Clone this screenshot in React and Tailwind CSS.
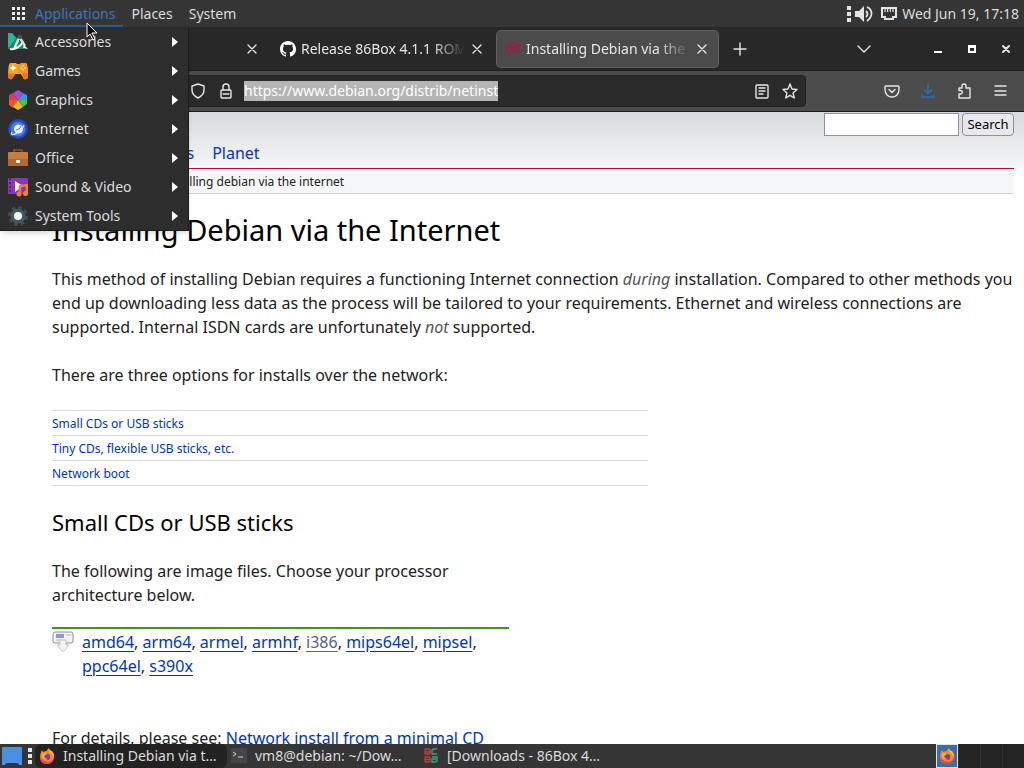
import { useState } from "react"
import clsx from "clsx"

function AccessoriesIcon() {
  return (
    <svg viewBox="0 0 20 20" className="size-5">
      <path d="M0 1h4l12 13v3H0z" fill="#178a74" />
      <path d="M0 1h4l4 5-7 9H0z" fill="#2bb597" />
      <path d="M2 17c5 1 11-2 13-8" fill="none" stroke="#f4f4f4" strokeWidth="2" />
      <path d="M11 6L7 15M12 6l5 8" stroke="#d8dcde" strokeWidth="2.4" />
      <path d="M7 13l-3 5 5-3zM16 13l4 4-5-1z" fill="#fff" />
      <circle cx="12" cy="5" r="2.2" fill="#44545c" />
    </svg>
  )
}

function GamesIcon() {
  return (
    <svg viewBox="0 0 20 20" className="size-5">
      <path d="M2 2h6l1 1h3l1-1h5q2 1 2 14-1 3-4 2l-3-5H7l-3 5q-3 1-4-2Q0 3 2 2z" fill="#f9a61b" />
      <path d="M10 3h2l1-1h5q2 1 2 14-1 3-4 2l-3-5h-3z" fill="#f8941f" />
      <path d="M2.500 7h5M5 4.500v5" stroke="#fff" strokeWidth="1.800" />
      <path d="M15 4v1.600M15 8v1.600M12.500 7h1.600M16.200 7h1.600" stroke="#fff3d0" strokeWidth="1.600" />
      <path d="M0 12l6 1-2 5q-3 1-4-2zM20 12l-6 1 2 5q3 1 4-2z" fill="#f2701c" />
    </svg>
  )
}

function GraphicsIcon() {
  return (
    <svg viewBox="0 0 20 20" className="size-5">
      <path d="M10 0l5 3-5 7-5-7z" fill="#a44be0" />
      <path d="M5 3L1 5v6l9-1z" fill="#e53b55" />
      <path d="M1 10v5l4 3 5-8z" fill="#f5502c" />
      <path d="M5 17l5 3 5-3-5-7z" fill="#fcb917" />
      <path d="M15 17l4-3v-5l-9 1z" fill="#48c04c" />
      <path d="M15 3l4 2v5h-9z" fill="#249ff0" />
    </svg>
  )
}

function InternetIcon() {
  return (
    <svg viewBox="0 0 20 20" className="size-5">
      <circle cx="10" cy="10" r="10" fill="#2446b8" />
      <circle cx="10" cy="10" r="7.500" fill="#3f7bf0" />
      <circle cx="10.500" cy="10" r="4.500" fill="#f2f6ff" />
      <path d="M4 13q-2 4 3 2 6-2 9-9" fill="none" stroke="#dce8ff" strokeWidth="1.400" />
      <path d="M8 11q4 0 5-4" fill="none" stroke="#3f7bf0" strokeWidth="1" />
    </svg>
  )
}

function OfficeIcon() {
  return (
    <svg viewBox="0 0 20 20" className="size-5">
      <path d="M6 5V2h8v3" fill="none" stroke="#8a5427" strokeWidth="1.600" />
      <rect y="4" width="20" height="14" rx="1" fill="#c77c3e" />
      <path d="M0 11h20v6a1 1 0 01-1 1H1a1 1 0 01-1-1z" fill="#b0682f" />
      <rect x="8" y="12" width="4" height="3" rx="1" fill="#fff" />
    </svg>
  )
}

function MediaIcon() {
  return (
    <svg viewBox="0 0 20 20" className="size-5">
      <rect y="1" width="20" height="16" rx="1" fill="#8a35ba" />
      <path d="M2 1v16" stroke="#5c2480" strokeWidth="2" strokeDasharray="2 2" />
      <path d="M7 4l8 5-8 6z" fill="#fff" />
      <path d="M12 17V9l7-1v8" fill="none" stroke="#f58220" strokeWidth="2.400" />
      <circle cx="11" cy="17" r="2.500" fill="#f58220" />
      <circle cx="17.500" cy="16.500" r="2.500" fill="#f9862a" />
    </svg>
  )
}

function ToolsIcon() {
  return (
    <svg viewBox="0 0 20 20" className="size-5">
      <circle cx="10" cy="10" r="8.500" fill="none" stroke="#3c4d53" strokeWidth="3" strokeDasharray="3.700 2.970" />
      <circle cx="10" cy="10" r="7.500" fill="#44575e" />
      <circle cx="10" cy="10" r="4" fill="#f4fafa" />
    </svg>
  )
}

function FirefoxIcon() {
  return (
    <svg viewBox="0 0 16 16" className="size-4 shrink-0">
      <path d="M2 4l1-2 1 2q2-1 4-1 0-2 2-3 0 2 2 3l1 0q3 3 2 7-2 6-7 6-6 0-7-6 0-3 1-6z" fill="#ff8a1c" />
      <path d="M10 0q0 2 2 3 3 3 3 6l-2-3q-3-2-3-6z" fill="#ffd93b" />
      <path d="M1 8q0 8 7 8 6 0 7-6-3 4-7 4-5-1-7-6z" fill="#ef3d45" />
      <circle cx="8" cy="9" r="3.200" fill="#7b3fb5" />
      <path d="M3 6q3-2 5 0l-3 2q1 3 4 3-4 2-6-2z" fill="#ffab2e" />
    </svg>
  )
}

function Stroke({ children, className = "size-4", width = 1.4 }) {
  return (
    <svg
      viewBox="0 0 16 16"
      fill="none"
      stroke="currentColor"
      strokeWidth={width}
      strokeLinecap="round"
      strokeLinejoin="round"
      className={className}
    >
      {children}
    </svg>
  )
}

function CloseMark() {
  return (
    <Stroke width={1.3}>
      <path d="M4 4l8 8M12 4l-8 8" />
    </Stroke>
  )
}

function Handle() {
  return (
    <span className="flex flex-col gap-[2px]">
      <span className="size-1 bg-[#e4e4e4]" />
      <span className="size-1 bg-[#e4e4e4]" />
      <span className="size-1 bg-[#e4e4e4]" />
    </span>
  )
}

const menuItems = [
  { label: "Accessories", Icon: AccessoriesIcon },
  { label: "Games", Icon: GamesIcon },
  { label: "Graphics", Icon: GraphicsIcon },
  { label: "Internet", Icon: InternetIcon },
  { label: "Office", Icon: OfficeIcon },
  { label: "Sound & Video", Icon: MediaIcon },
  { label: "System Tools", Icon: ToolsIcon },
]

const sections = ["Small CDs or USB sticks", "Tiny CDs, flexible USB sticks, etc.", "Network boot"]
const archs = ["amd64", "arm64", "armel", "armhf", "i386", "mips64el", "mipsel", "ppc64el", "s390x"]

function TopPanel() {
  return (
    <header className="relative z-20 flex h-[27px] shrink-0 items-center bg-[#353535] text-[#dcdcdc]">
      <button type="button" className="flex h-full items-center gap-[9px] border-b-2 border-[#215d9c] pt-[2px] pr-2 pl-3 text-[#3f74b8]">
        <svg viewBox="0 0 14 14" className="size-[14px]" fill="#eeeeee">
          {[0, 5, 10].map((y) => [0, 5, 10].map((x) => <rect key={`${x}-${y}`} x={x} y={y} width="3" height="3" />))}
        </svg>
        Applications
      </button>
      <button type="button" className="px-2">Places</button>
      <button type="button" className="px-2">System</button>

      <div className="ml-auto flex items-center gap-1 pr-[5px]">
        <Handle />
        <svg viewBox="0 0 18 16" className="h-4 w-[18px]" fill="#e4e4e4">
          <path d="M0 5h4l5-5v16l-5-5H0z" />
          <path d="M11 5q3 3 0 6M12 1q6 3 4 9-1 3-4 5" fill="none" stroke="#e4e4e4" strokeWidth="1.8" />
        </svg>
        <svg viewBox="0 0 16 16" className="ml-1 size-4" fill="none" stroke="#e4e4e4" strokeWidth="2">
          <path d="M1 2h14v9h-3v2H4v-2H1z" />
          <path d="M4 3v3M6.600 3v3M9.300 3v3M12 3v3" strokeWidth="1.200" />
        </svg>
        <time className="pl-px">Wed Jun 19, 17:18</time>
      </div>
    </header>
  )
}

function AppMenu() {
  return (
    <ul className="absolute top-[27px] left-0 z-30 w-[189px] border-r border-b border-[#1c1c1c] bg-[#2d2d2d] text-[#dcdcdc] shadow-md">
      {menuItems.map(({ label, Icon }) => (
        <li key={label}>
          <button type="button" className="flex h-[29px] w-full items-center pr-[10px] pl-2 text-left">
            <Icon />
            <span className="flex-1 pl-[7px]">{label}</span>
            <svg viewBox="0 0 6 10" className="h-[10px] w-[6px]" fill="#ffffff">
              <path d="M0 0l6 5-6 5z" />
            </svg>
          </button>
        </li>
      ))}
    </ul>
  )
}

function Tab({ icon, title, active }) {
  return (
    <div
      className={clsx(
        "flex h-9 w-[221px] shrink-0 items-center rounded-sm pr-2 pl-2",
        active && "bg-[#4b4b4b] ring-1 ring-[#606060]"
      )}
    >
      {icon}
      <span className="mr-1 ml-[5px] flex-1 overflow-hidden mask-r-from-80% whitespace-nowrap">{title}</span>
      <button type="button" aria-label="Close tab">
        <CloseMark />
      </button>
    </div>
  )
}

function BrowserChrome() {
  const [url, setUrl] = useState("https://www.debian.org/distrib/netinst")

  return (
    <div className="shrink-0 text-[#e6e6e6]">
      <div className="flex h-11 items-center gap-1 border-b border-[#1c1c1c] bg-[#282828] pr-[10px] pl-[47px]">
        <Tab icon={<span className="size-4" />} title="" />
        <Tab
          icon={
            <svg viewBox="0 0 16 16" className="size-4 shrink-0" fill="#ffffff">
              <path d="M8 0C3.58 0 0 3.58 0 8c0 3.54 2.29 6.53 5.47 7.59.4.07.55-.17.55-.38 0-.19-.01-.82-.01-1.49-2.01.37-2.53-.49-2.69-.94-.09-.23-.48-.94-.82-1.13-.28-.15-.68-.52-.01-.53.63-.01 1.08.58 1.23.82.72 1.21 1.87.87 2.33.66.07-.52.28-.87.51-1.07-1.78-.2-3.64-.89-3.64-3.95 0-.87.31-1.59.82-2.15-.08-.2-.36-1.02.08-2.12 0 0 .67-.21 2.2.82.64-.18 1.32-.27 2-.27s1.36.09 2 .27c1.53-1.04 2.2-.82 2.2-.82.44 1.1.16 1.92.08 2.12.51.56.82 1.27.82 2.15 0 3.07-1.87 3.75-3.65 3.95.29.25.54.73.54 1.48 0 1.07-.01 1.93-.01 2.2 0 .21.15.46.55.38A8.01 8.01 0 0016 8c0-4.42-3.58-8-8-8z" />
            </svg>
          }
          title="Release 86Box 4.1.1 ROMs"
        />
        <Tab
          active
          icon={
            <svg viewBox="0 0 16 16" className="size-4 shrink-0" fill="none" stroke="#a01c48" strokeWidth="2">
              <path d="M6 15C1 12 0 7 3 4 6 0 12 1 14 5c1 4-2 7-5 6-3 0-4-3-2-5 2-1 4 0 3 2" />
            </svg>
          }
          title="Installing Debian via the Internet"
        />
        <button type="button" aria-label="New tab" className="ml-[10px]">
          <Stroke><path d="M2 8h12M8 2v12" /></Stroke>
        </button>
        <div className="ml-auto flex items-center gap-[18px]">
          <button type="button" aria-label="List all tabs" className="mr-10">
            <Stroke><path d="M2 5l6 6 6-6" /></Stroke>
          </button>
          <button type="button" aria-label="Minimize" className="flex size-4 items-end justify-center pb-1">
            <span className="h-[2px] w-2 bg-white" />
          </button>
          <button type="button" aria-label="Maximize" className="flex size-4 items-center justify-center">
            <span className="size-2 border-2 border-t-3 border-white" />
          </button>
          <button type="button" aria-label="Close window">
            <Stroke width={2}><path d="M5 5l6 6M11 5l-6 6" /></Stroke>
          </button>
        </div>
      </div>

      <div className="flex h-[41px] items-center border-b border-[#1c1c1c] bg-[#4b4b4b] pr-4 pl-[140px]">
        <div className="flex h-[32px] flex-1 items-center rounded-sm border border-[#1f1f1f] bg-[#2a2a2a] px-[7px]">
          <Stroke className="ml-[42px] size-4 shrink-0">
            <path d="M8 1l6 2v4q0 5-6 8-6-3-6-8V3z" />
          </Stroke>
          <Stroke className="ml-3 size-4 shrink-0">
            <rect x="3" y="7" width="10" height="8" rx="1" />
            <path d="M5 7V4a3 3 0 016 0v3" />
            <path d="M5 11h6" />
          </Stroke>
          <div className="flex flex-1 pl-[10px]">
            <input
              type="text"
              aria-label="Address"
              value={url}
              onChange={(e) => setUrl(e.target.value)}
              className="field-sizing-content h-5 bg-[#b5b5b5] text-white outline-none"
            />
          </div>
          <button type="button" aria-label="Reader view">
            <Stroke>
              <rect x="2" y="2" width="12" height="13" rx="1" />
              <path d="M5 5h6M5 8h6M5 11h4" />
            </Stroke>
          </button>
          <button type="button" aria-label="Bookmark" className="ml-3">
            <Stroke>
              <path d="M8 1l2 5 5 .500-4 3.500 1.300 5L8 12.300 3.700 15 5 10 1 6.500 6 6z" />
            </Stroke>
          </button>
        </div>
        <div className="ml-[78px] flex items-center gap-5">
          <button type="button" aria-label="Save to Pocket">
            <Stroke>
              <path d="M2 3h12a1 1 0 011 1v3a7 7 0 01-14 0V4a1 1 0 011-1zM5 6.500l3 3 3-3" />
            </Stroke>
          </button>
          <button type="button" aria-label="Downloads" className="text-[#2f6db8]">
            <Stroke><path d="M8 1v9M4.500 7L8 10.500 11.500 7M2 12v2h12v-2" /></Stroke>
          </button>
          <button type="button" aria-label="Extensions">
            <Stroke>
              <path d="M6 5V3a2 2 0 014 0v2h4v10H3v-4h1.500a1.500 1.500 0 000-3.500H3V5z" />
            </Stroke>
          </button>
          <button type="button" aria-label="Menu">
            <Stroke><path d="M3 3h11M3 8h11M3 12h11" /></Stroke>
          </button>
        </div>
      </div>
    </div>
  )
}

function DebianPage() {
  return (
    <div className="min-h-0 flex-1 overflow-hidden bg-white text-base text-[#222222]">
      <div className="flex h-14 justify-between bg-linear-to-b from-[#d7dade] to-[#f5f6f7] pr-[10px]">
        <nav className="flex items-end gap-[18px] pb-[3px] pl-[113px] text-[#0035c7]">
          <a href="#micronews">Micronews</a>
          <a href="#planet">Planet</a>
        </nav>
        <form className="flex h-6 gap-[3px] pt-px text-[13px]" onSubmit={(e) => e.preventDefault()}>
          <input type="text" aria-label="Search" className="w-[135px] border border-[#8f8f9d] bg-white px-1" />
          <button type="submit" className="w-[52px] rounded-sm border border-[#8f8f9d] bg-[#e9e9ed] text-black">
            Search
          </button>
        </form>
      </div>
      <p className="mr-[10px] h-[26px] border-t border-b border-t-[#c70036] border-b-[#d2d3d7] bg-[#f5f6f7] pl-[162px] text-[12px] leading-[25px]">
        installing debian via the internet
      </p>

      <main className="pr-[10px] pl-[52px]">
        <h1 className="pt-[18px] text-[29px] leading-9 text-black">Installing Debian via the Internet</h1>
        <p className="mt-[19px]">
          This method of installing Debian requires a functioning Internet connection{" "}
          <em className="text-[#555555]">during</em> installation. Compared to other methods you end up downloading
          less data as the process will be tailored to your requirements. Ethernet and wireless connections are
          supported. Internal ISDN cards are unfortunately <em className="text-[#555555]">not</em> supported.
        </p>
        <p className="mt-6">There are three options for installs over the network:</p>

        <ul className="mt-[23px] w-[62%] border-t border-[#d9dadd] text-[12px] text-[#0035c7]">
          {sections.map((name) => (
            <li key={name} className="h-[25px] border-b border-[#d9dadd] leading-[25px]">
              <a href="#section">{name}</a>
            </li>
          ))}
        </ul>

        <h2 className="mt-[22px] text-[22px] leading-7 text-black">Small CDs or USB sticks</h2>
        <div className="w-[48%] pr-[5px]">
          <p className="mt-[23px]">The following are image files. Choose your processor architecture below.</p>
          <div className="mt-5 flex border-t-2 border-[#3c9a10] pt-px">
            <svg viewBox="0 0 22 22" className="mt-px mr-2 size-[22px] shrink-0">
              <rect x="1" y="1" width="20" height="11" rx="2" fill="#f1f1f4" stroke="#93939b" />
              <rect x="4" y="3" width="8" height="4" fill="#8d98dc" />
              <path d="M14 4h5M4 9h6" stroke="#b4b4bb" />
              <path d="M8 9h6v5h3l-5 6h-2l-5-6h3z" fill="#f4f4f6" stroke="#c4c4ca" />
            </svg>
            <p>
              {archs.map((arch, i) => (
                <span key={arch}>
                  <a
                    href="#download"
                    className={clsx(
                      "underline underline-offset-3",
                      arch === "i386" ? "text-[#54638c]" : "text-[#0035c7]"
                    )}
                  >
                    {arch}
                  </a>
                  {i < archs.length - 1 && ", "}
                </span>
              ))}
            </p>
          </div>
        </div>
        <p className="mt-12">
          For details, please see: <a href="#minimal" className="text-[#0035c7] underline underline-offset-3">Network install from a minimal CD</a>
        </p>
      </main>
    </div>
  )
}

function Task({ icon, title, active }) {
  return (
    <button
      type="button"
      className={clsx("flex h-full w-48 items-center gap-2 px-1 text-left", active && "rounded-md bg-[#222222]")}
    >
      {icon}
      <span className="whitespace-nowrap">{title}</span>
    </button>
  )
}

function BottomPanel() {
  return (
    <footer className="flex h-6 shrink-0 items-center bg-[#353535] text-[#dcdcdc]">
      <button type="button" aria-label="Show desktop" className="ml-[2px]">
        <svg viewBox="0 0 20 18" className="h-[18px] w-5">
          <rect width="20" height="15" rx="1" fill="#4a90e2" />
          <path d="M0 15h20v3H17l-1-2H4l-1 2H0z" fill="#4a90e2" />
        </svg>
      </button>
      <div className="mr-[3px] ml-[6px]"><Handle /></div>
      <Task active icon={<FirefoxIcon />} title="Installing Debian via t…" />
      <Task
        icon={
          <svg viewBox="0 0 16 16" className="size-4 shrink-0">
            <rect width="16" height="15" rx="1" fill="#454545" />
            <path d="M2 4l3 2-3 2M7 9h5" fill="none" stroke="#d0d0d0" />
          </svg>
        }
        title="vm8@debian: ~/Dow…"
      />
      <Task
        icon={
          <svg viewBox="0 0 16 16" className="size-4 shrink-0" fill="none" strokeWidth="1.400">
            <rect x="2" y="1" width="5" height="5" rx="1" stroke="#c73a42" />
            <rect x="2" y="9" width="5" height="5" rx="1" stroke="#c73a42" />
            <path d="M2 4h5M2 11.500h5" stroke="#c73a42" />
            <path d="M14 1h-3q-2 0-2 2v3h5M9 9h5v3q0 2-2 2H9v-3h4" stroke="#27a67c" />
          </svg>
        }
        title="[Downloads - 86Box 4…"
      />
      <div className="ml-auto flex h-full gap-px bg-[#303030]">
        <button type="button" aria-label="Workspace 1" className="flex w-[22px] items-center justify-center border border-[#d8e4f0] bg-[#3b6ea5]">
          <FirefoxIcon />
        </button>
        <button type="button" aria-label="Workspace 2" className="w-[21px] bg-[#242424]" />
        <button type="button" aria-label="Workspace 3" className="w-[21px] bg-[#242424]" />
        <button type="button" aria-label="Workspace 4" className="w-[21px] bg-[#242424]" />
      </div>
    </footer>
  )
}

export default function App() {
  return (
    <div className="relative flex h-screen flex-col overflow-hidden font-['Noto_Sans',sans-serif] text-[14px] leading-5">
      <TopPanel />
      <AppMenu />
      <BrowserChrome />
      <DebianPage />
      <BottomPanel />

      {/* mouse pointer */}
      <svg viewBox="0 0 12 19" className="absolute top-[22px] left-[86px] z-40 h-[19px] w-3">
        <path d="M1 1v14l3-3 3 6 2-1-3-6h5z" fill="#111111" stroke="#ffffff" strokeWidth="1" />
      </svg>
    </div>
  )
}
